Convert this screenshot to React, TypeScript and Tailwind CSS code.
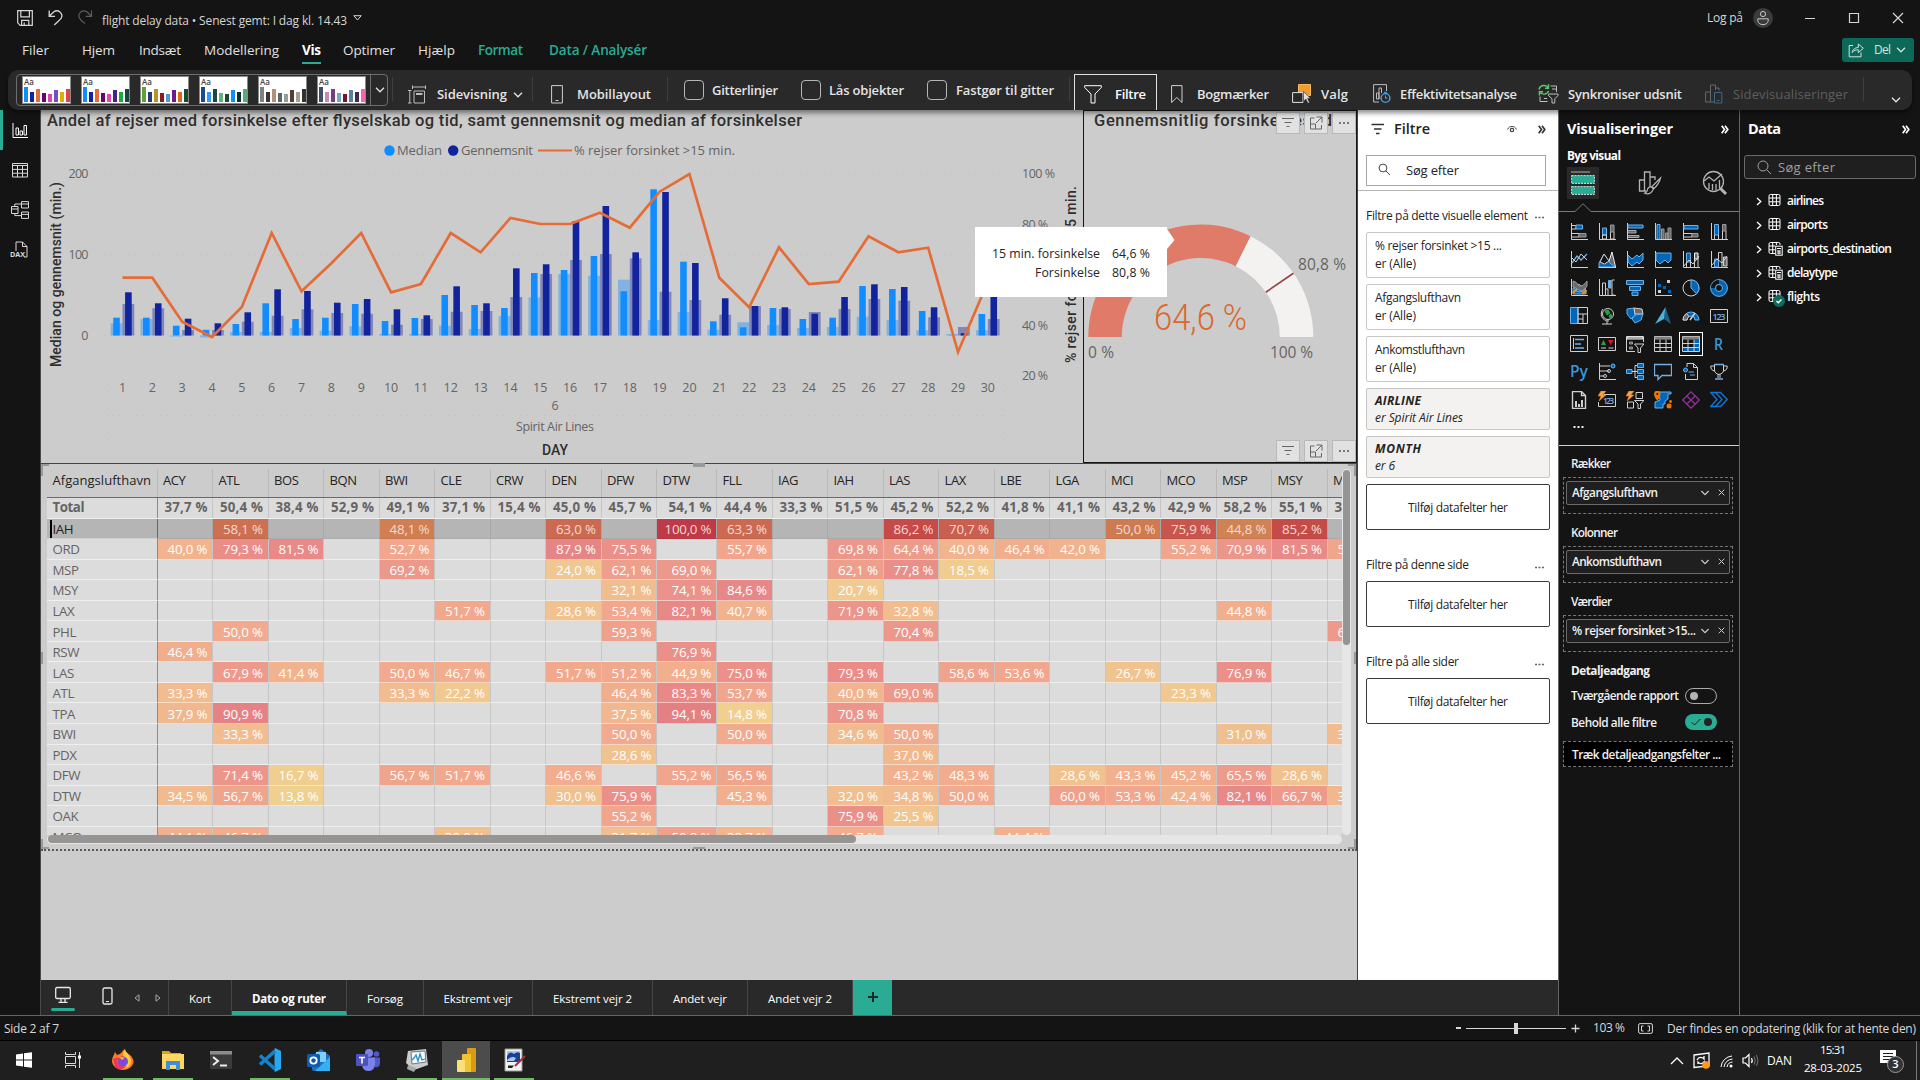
import React, { useLayoutEffect, useRef, useState } from "react";
import clsx from "clsx";

/* Text that is tracked so that it fills a given width. */
function Fit({ w, className, children }: { w: number; className?: string; children: string }) {
  const ref = useRef<HTMLSpanElement>(null);
  const [ls, setLs] = useState(0);
  useLayoutEffect(() => {
    const el = ref.current;
    if (el) setLs((w - el.getBoundingClientRect().width) / Math.max(1, children.length - 1));
  }, [w, children]);
  return (
    <span className={clsx("inline-block shrink-0 whitespace-pre", className)} style={{ width: w }}>
      <span ref={ref} className="inline-block" style={{ letterSpacing: ls }}>
        {children}
      </span>
    </span>
  );
}

type IconProps = { className?: string; children: React.ReactNode; w?: number; h?: number };
const Ico = ({ className, children, w = 18, h = 18 }: IconProps) => (
  <svg width={w} height={h} viewBox={`0 0 ${w} ${h}`} fill="none" stroke="currentColor" className={clsx("shrink-0", className)}>
    {children}
  </svg>
);

const Chevron = ({ className }: { className?: string }) => (
  <Ico w={10} h={6} className={className}>
    <path d="M1 .8L5 4.8L9 .8" strokeWidth="1.3" />
  </Ico>
);

/* ---------- title bar and menu ---------- */

function TitleBar() {
  return (
    <div className="flex h-9 items-center text-[#d6d6d6]">
      <Ico w={16} h={16} className="ml-[17px]">
        <path d="M.7 .7H15.3V15.3H3.2L.7 12.8Z" strokeWidth="1.2" />
        <path d="M3.8 .7V6.8H12.4V.7M4.6 15V10.4H11.8V15M7.2 12.5V15" strokeWidth="1.2" />
      </Ico>
      <Ico w={16} h={17} className="-mt-px ml-[15px]">
        <path d="M1.2 1.5V7.3H7M1.4 7L5.6 3C10 -.2 15.4 4 13.4 8.8C12.6 10.6 8.5 14 6.2 16" strokeWidth="1.3" />
      </Ico>
      <Ico w={16} h={17} className="-mt-px ml-[13px] text-[#5c5c5c]">
        <path d="M14.5 1.5V7.3H8.7M14.3 7L10.1 3C5.7 -.2 .3 4 2.3 8.8C3 10.4 5 12.5 8 14.5" strokeWidth="1.2" />
      </Ico>
      <Fit w={245} className="ml-[9px] mt-[5px] text-[12px]">flight delay data • Senest gemt: I dag kl. 14.43</Fit>
      <Ico w={9} h={6} className="ml-[6px]">
        <path d="M.8 .7H8.2L4.5 5Z" />
      </Ico>
      <Fit w={36} className="ml-[1345px] text-[12px]">Log på</Fit>
      <div className="ml-[10px] flex size-5 items-center justify-center rounded-full bg-[#3b3b3b]">
        <Ico w={14} h={16} className="text-[#c8c8c8]">
          <circle cx="7" cy="4" r="2.6" />
          <path d="M1.8 8.8H12.2C12.6 13 10 14.6 7 14.6S1.4 13 1.8 8.8Z" />
        </Ico>
      </div>
      <Ico w={12} h={12} className="ml-[31px] -mt-px"><path d="M1 6.5H11" /></Ico>
      <Ico w={12} h={12} className="ml-[32px]"><path d="M1.5 1.5H10.5V10.5H1.5Z" strokeWidth="1.2" /></Ico>
      <Ico w={12} h={12} className="ml-[32px]"><path d="M1 1L11 11M11 1L1 11" strokeWidth="1.2" /></Ico>
    </div>
  );
}

function MenuBar() {
  return (
    <div className="flex h-[34px] items-start pt-[3px] text-[13.5px] leading-[22px] text-[#e0e0e0]">
      <Fit w={27} className="ml-[22px]">Filer</Fit>
      <Fit w={33} className="ml-[33px]">Hjem</Fit>
      <Fit w={42} className="ml-[24px]">Indsæt</Fit>
      <Fit w={75} className="ml-[23px]">Modellering</Fit>
      <div className="-translate-y-px ml-[23px] mt-px h-[25px] w-[19px] border-b-2 border-[#2aac94] font-bold leading-[22px] text-white">
        <Fit w={19}>Vis</Fit>
      </div>
      <Fit w={52} className="ml-[22px]">Optimer</Fit>
      <Fit w={37} className="ml-[23px]">Hjælp</Fit>
      <Fit w={45} className="ml-[23px] font-semibold text-[#2aac94]">Format</Fit>
      <Fit w={98} className="ml-[26px] font-semibold text-[#2aac94]">Data / Analysér</Fit>
      <div className="-mt-px ml-[1195px] flex h-6 w-[72px] items-center rounded-[3px] bg-[#0c695a] text-[#cfe3df]">
        <Ico w={16} h={16} className="ml-[6px]">
          <path d="M5 3.5H1.2V14.8H13V10.5" />
          <path d="M4 10.5C5 7 7.5 5.500 10.300 5.500V2L15.300 6.300L10.300 10.600V7.800C8 7.600 6 8.400 4 10.500Z" />
        </Ico>
        <Fit w={17} className="ml-[10px] text-[12px]">Del</Fit>
        <Chevron className="ml-[5px]" />
      </div>
    </div>
  );
}

/* ---------- ribbon ---------- */

const heights = [15, 10, 13, 9, 8, 12, 10, 13];
const themes: string[][] = [
  ["#118dff", "#12239e", "#e66c37", "#6b007b", "#e044a7", "#744ec2", "#d9b300", "#d64550"],
  ["#118dff", "#12239e", "#e66c37", "#6b007b", "#e645ab", "#45247f", "#1aab40", "#15443e"],
  ["#5ea336", "#2b3b70", "#b0962e", "#8b1a1a", "#5b93d3", "#6b1b8f", "#e0671a", "#174d2c"],
  ["#1b4a8e", "#3297ff", "#174a45", "#63b17d", "#174d2c", "#118dff", "#0c2e28", "#5ea580"],
  ["#7a8387", "#3d3331", "#b59078", "#5b6467", "#8fa09a", "#5c3a33", "#a89f94", "#333333"],
  ["#3e4f63", "#c987b5", "#75407a", "#75a5c9", "#7a0f3f", "#58839e", "#4a2550", "#ee6ab0"],
];

function Thumb({ bars }: { bars: string[] }) {
  return (
    <div className="flex h-7 w-[49px] shrink-0 flex-col border border-[#8a8a8a] bg-white pl-px">
      <span className="h-[10px] text-[8px] leading-[10px] text-[#444]">Aa</span>
      <div className="flex h-[15px] items-end gap-[2px]">
        {bars.map((b, i) => (
          <span key={i} className="w-[4px]" style={{ backgroundColor: b, height: heights[i] }} />
        ))}
      </div>
    </div>
  );
}

const Sep = ({ className }: { className: string }) => <span className={clsx("mb-[2px] h-6 w-px shrink-0 bg-[#3f3f3f]", className)} />;
const Check = ({ className }: { className: string }) => (
  <span className={clsx("size-5 shrink-0 rounded-[4px] border border-[#b5b5b5]", className)} />
);

function Ribbon() {
  return (
    <div className="relative z-10 ml-2 flex h-10 w-[1904px] items-center rounded-[10px] bg-[#292929] text-[13px] font-semibold text-[#e4e4e4] shadow-[0_3px_5px_rgba(0,0,0,0.45)]">
      <div className="ml-2 flex h-8 w-[372px] shrink-0 items-center rounded-[4px] border border-[#6e6e6e]">
        <div className="ml-[5px] flex gap-[10px]">
          {themes.map((t, i) => <Thumb key={i} bars={t} />)}
        </div>
        <span className="ml-[4px] h-full w-px bg-[#6e6e6e]" />
        <Chevron className="ml-[4px]" />
      </div>
      <Sep className="ml-[4px]" />
      <Ico w={18} h={19} className="ml-[15px] mt-2 text-[#bdbdbd]">
        <path d="M4.5 2H17.5M4.5 .5V4M17.5 .5V4M1.8 5.5V18M0 5.5H3.5M0 18H3.5M6 6H16.5V18H6Z" />
        <path d="M8 9H14.5" strokeWidth="2" />
      </Ico>
      <Fit w={70} className="ml-[11px] mt-[9px]">Sidevisning</Fit>
      <Chevron className="ml-[6px] mt-[9px]" />
      <Sep className="ml-[9px]" />
      <Ico w={12} h={19} className="ml-[18px] mt-2 text-[#d0d0d0]">
        <path d="M.6 .6H11.4V18H.6ZM4.5 15.5H7.5" />
      </Ico>
      <Fit w={74} className="ml-[14px] mt-[9px]">Mobillayout</Fit>
      <Sep className="ml-[16px]" />
      <Check className="ml-[16px]" />
      <Fit w={66} className="ml-[8px] mt-px">Gitterlinjer</Fit>
      <Check className="ml-[23px]" />
      <Fit w={75} className="ml-[8px] mt-px">Lås objekter</Fit>
      <Check className="ml-[23px]" />
      <Fit w={98} className="ml-[9px] mt-px">Fastgør til gitter</Fit>
      <Sep className="ml-[15px]" />
      <div className="ml-[4px] mt-1 flex h-9 w-[83px] shrink-0 items-center border border-b-0 border-[#e0e0e0] text-white">
        <Ico w={18} h={19} className="ml-[9px] mt-1">
          <path d="M.7 .7H17.3V2.5L11 9V18H7V9L.7 2.5Z" />
        </Ico>
        <Fit w={31} className="ml-[13px] mt-1">Filtre</Fit>
      </div>
      <Ico w={12} h={19} className="ml-[14px] mt-2 text-[#d0d0d0]">
        <path d="M.6 .6H11V17.5L5.8 12.5L.6 17.5Z" />
      </Ico>
      <Fit w={72} className="ml-[14px] mt-[9px]">Bogmærker</Fit>
      <Ico w={20} h={20} className="ml-[23px] mt-2">
        <path d="M6.5 .5H18.5V11.5H6.5Z" fill="#f09d2d" stroke="#f7b85c" />
        <path d="M.6 8.6H11V18.4H.6Z" fill="#292929" />
        <path d="M11.5 7.5L18.5 14.2L15.6 14.4L17.5 18.4L15.8 19.2L14 15.2L11.5 17.2Z" fill="#ddd" stroke="#292929" strokeWidth=".6" />
      </Ico>
      <Fit w={27} className="ml-[9px] mt-[9px]">Valg</Fit>
      <Ico w={18} h={20} className="ml-[25px] mt-2 text-[#bdbdbd]">
        <path d="M6 18H.6V.6H13.5V7M3.5 15V9H6V15ZM6 15V4H8.5V9" />
        <circle cx="12.5" cy="14" r="4.4" stroke="#4da3dd" strokeWidth="1.4" />
        <path d="M12.5 11.5V14.2H14.5M11 8.4H14" stroke="#4da3dd" />
      </Ico>
      <Fit w={117} className="ml-[9px] mt-[9px]">Effektivitetsanalyse</Fit>
      <Ico w={21} h={20} className="ml-[21px] mt-2 text-[#bdbdbd]">
        <path d="M1 5.5C2 1 8 0 10.5 4M10.5 .3V4.2H7M10.5 7C9 11 3.5 11 1.6 8M1.4 11.5V7.8H5" stroke="#63c46f" strokeWidth="1.4" />
        <path d="M12.5 2H18.5V8M14 5H18M2 12.5V17.5H9.5M6 14.5H9" />
        <path d="M10.5 10H20V11.5L16.8 14.8V19H14V14.8L10.5 11.5Z" />
      </Ico>
      <Fit w={114} className="ml-[9px] mt-[9px]">Synkroniser udsnit</Fit>
      <Ico w={18} h={20} className="ml-[23px] mt-2 text-[#686868]">
        <path d="M9 18H.6V8H5.5V18M5.5 8V1H10.5V6M10.5 4H14V6.5" />
        <path d="M9.5 8.5H16.8V19H9.5ZM12 16.5H14.5" stroke="#3f6a85" />
      </Ico>
      <Fit w={115} className="ml-[10px] mt-[9px] font-normal text-[#5e5e5e]">Sidevisualiseringer</Fit>
      <Sep className="ml-[15px]" />
      <Chevron className="ml-[27px] mt-[19px]" />
    </div>
  );
}

/* ---------- left rail ---------- */

function Rail() {
  return (
    <div className="relative flex w-[41px] shrink-0 flex-col items-center border-r border-[#4a4a4a] bg-[#141414] pt-[11px] text-[#d8d8d8]">
      <span className="absolute left-0 top-0 h-10 w-[3px] bg-[#2aac94]" />
      <Ico className="text-white"><path d="M2 2V16.5H17M5 14V7H7.5V14ZM9 14V10H11.5V14ZM13 14V4.5H15.5V14Z" /></Ico>
      <Ico className="mt-[22px]"><path d="M1.5 2.5H16.5V16H1.5ZM1.5 4.5H16.5M1.5 8.4H16.5M1.5 12.2H16.5M6.5 4V16M11.5 4V16" /></Ico>
      <Ico w={20} h={18} className="mt-[22px]"><path d="M1.5 5.5H8V12.5H1.5ZM1.5 8H8M11.5 .6H18.5V7H11.5ZM11.5 3H18.5M11.5 11H18.5V17.4H11.5ZM11.5 13.4H18.5M4.8 5.5V3H11.5M4.8 12.5V14.6H11.5" /></Ico>
      <svg width="20" height="20" viewBox="0 0 20 20" className="mt-[21px]">
        <path d="M6 11V2H12.5L17 6.5V17H14M12.5 2V6.5H17" fill="none" stroke="currentColor" />
        <text x="0" y="17" fontSize="7.5" fontWeight="700" textLength="15" lengthAdjust="spacingAndGlyphs" fill="currentColor">DAX</text>
      </svg>
    </div>
  );
}

/* ---------- combo chart ---------- */

// Pixel tops: [light back, light front, dark back, dark front, line]
const days: number[][] = [
  [323.3, 317.7, 304, 292.3, 277.7], [319, 317.7, 308.3, 303.3, 277.7], [336.5, 325.7, 330, 318.7, 321.7],
  [337.5, 329.8, 330, 323.3, 337], [332, 324, 321.7, 312.3, 307], [332, 303.3, 315.7, 289.3, 233],
  [328, 319, 309.3, 291, 291.3], [330.7, 317.7, 313, 302.7, 263.3], [326.3, 304, 313.7, 299, 233],
  [334, 321, 324.7, 309.3, 292.3], [334, 318, 319, 315.3, 284], [325.7, 295, 311.7, 286.3, 233],
  [329, 305, 311, 303.3, 252.3], [316, 308, 297, 268.3, 218], [297.3, 273, 274, 264.3, 224],
  [274, 270, 260, 221, 224], [275.7, 256, 254, 206, 212.7], [279.7, 291.3, 258.3, 252.3, 227.7],
  [320, 189.3, 291.7, 192, 191.7], [312, 261.7, 300, 263, 174], [329.7, 321.3, 314.7, 298.3, 277.7],
  [322.3, 327.3, 306, 306, 307.3], [325, 308, 309, 307.3, 247.3], [328, 319, 312, 313.7, 284],
  [327, 317.7, 309, 297, 281.7], [316.7, 286, 299, 284.3, 236.3], [320, 289, 300.7, 287, 252.3],
  [330.3, 311, 317.3, 307.3, 247.7], [334, 335.3, 327, 333.3, 352], [330.3, 314, 319, 294, 281.7],
];
const cx = (i: number) => 122.5 + i * 29.84;
const BASE = 335.5;

function ComboChart() {
  const bar = (x: number, w: number, y: number, fill: string) => (
    <rect x={x} width={w} y={Math.min(y, BASE)} height={Math.abs(BASE - y)} fill={fill} />
  );
  return (
    <svg width="1042" height="353" viewBox="41 110 1042 353" className="shrink-0" fontSize="12.5" fill="#666463">
      <text x="47" y="126" textLength="755" className="font-['Roboto'] font-medium" fontSize="16.5" fill="#302f2e">Andel af rejser med forsinkelse efter flyselskab og tid, samt gennemsnit og median af forsinkelser</text>
      <circle cx="389.5" cy="150.5" r="5.2" fill="#118dff" />
      <text x="397" y="155" textLength="45" fontSize="13">Median</text>
      <circle cx="453.2" cy="150.5" r="5.2" fill="#12239e" />
      <text x="461" y="155" textLength="72" fontSize="13">Gennemsnit</text>
      <path d="M538 150.5H572" stroke="#e66c37" strokeWidth="2" />
      <text x="574" y="155" textLength="161" fontSize="13">% rejser forsinket &gt;15 min.</text>
      {[174, 255, 336].map((y) => (
        <path key={y} d={`M98 ${y}H1012`} stroke="#c0c0c0" strokeDasharray="1 5" />
      ))}
      <path d="M107.5 379V440M1003.5 379V440M107 415.5H1003" stroke="#c0c0c0" strokeDasharray="1 5" />
      <text x="88.5" y="178" textAnchor="end" textLength="20">200</text>
      <text x="88.5" y="259" textAnchor="end" textLength="20">100</text>
      <text x="88.5" y="340" textAnchor="end">0</text>
      <text x="1022" y="178" textLength="33">100 %</text>
      <text x="1022" y="229" textLength="26">80 %</text>
      <text x="1022" y="330" textLength="26">40 %</text>
      <text x="1022" y="380" textLength="26">20 %</text>
      <text transform="translate(60.5 367) rotate(-90)" textLength="185" className="font-['Roboto'] font-medium" fontSize="14" fill="#302f2e">Median og gennemsnit (min.)</text>
      <text transform="translate(1075.5 363) rotate(-90)" textLength="177" className="font-['Roboto'] font-medium" fontSize="14" fill="#302f2e">% rejser forsinket &gt;15 min.</text>
      {days.map((d, i) => (
        <g key={i}>
          {bar(cx(i) - 11.8, 11.8, d[0], "rgba(17,141,255,0.4)")}
          {bar(cx(i), 11.8, d[2], "rgba(18,35,158,0.4)")}
          {bar(cx(i) - 9.3, 6.6, d[1], "#118dff")}
          {bar(cx(i) + 2.6, 6.6, d[3], "#12239e")}
          <text x={cx(i)} y="392" textAnchor="middle">{i + 1}</text>
        </g>
      ))}
      <polyline points={days.map((d, i) => `${cx(i)},${d[4]}`).join(" ")} fill="none" stroke="#e66c37" strokeWidth="2.7" />
      <text x="555" y="410" textAnchor="middle">6</text>
      <text x="516" y="431" textLength="78">Spirit Air Lines</text>
      <text x="542" y="455" textLength="26" className="font-['Roboto'] font-medium" fontSize="14" fill="#302f2e">DAY</text>
    </svg>
  );
}

/* ---------- gauge ---------- */

const GX = 1200.8, GY = 337, RO = 112.5, RI = 79;
const pt = (r: number, f: number) => `${GX - r * Math.cos(Math.PI * f)} ${GY - r * Math.sin(Math.PI * f)}`;
const arc = (a: number, b: number) => `M${pt(RO, a)}A${RO} ${RO} 0 0 1 ${pt(RO, b)}L${pt(RI, b)}A${RI} ${RI} 0 0 0 ${pt(RI, a)}Z`;

function VisualButtons({ className }: { className: string }) {
  const box = "flex h-[22px] w-6 items-center justify-center border border-[#b9b9b9] bg-[#e1e1e1] text-[#666]";
  return (
    <div className={clsx("absolute right-0 flex gap-1", className)}>
      <span className={box}><Ico w={14} h={12}><path d="M1 1.5H13M3.5 5.5H10.5M5.5 9.5H8.5" /></Ico></span>
      <span className={box}><Ico w={14} h={14}><path d="M5.5 2H1.5V13H12.5V9M7.5 1H13V6.5M13 1L7 7M1.5 8H6.5V13" /></Ico></span>
      <span className={box}><Ico w={14} h={12}><path d="M2 6H4M6 6H8M10 6H12" strokeWidth="2" stroke="#777" /></Ico></span>
    </div>
  );
}

function Gauge() {
  return (
    <div className="relative h-[353px] w-[274px] shrink-0 border border-[#151515]">
      <svg width="272" height="351" viewBox="1084 111 272 351" fill="#666463">
        <text x="1094" y="126" textLength="238" className="font-['Roboto'] font-medium" fontSize="16.5" fill="#302f2e">Gennemsnitlig forsinkelsestid</text>
        <path d={arc(0, 0.646)} fill="#e07b69" />
        <path d={arc(0.646, 1)} fill="#f3f2f0" />
        <path d={`M${pt(RI, 0.808)}L${pt(RO, 0.808)}`} stroke="#944747" strokeWidth="1.7" />
        <text x="1154" y="329.5" textLength="93" lengthAdjust="spacingAndGlyphs" className="font-['Roboto'] font-light" fontSize="36.5" fill="#d9692f">64,6 %</text>
        <text x="1298" y="270" textLength="48" fontSize="15.5">80,8 %</text>
        <text x="1088" y="358" textLength="26" fontSize="15.5">0 %</text>
        <text x="1270" y="358" textLength="43" fontSize="15.5">100 %</text>
      </svg>
      <VisualButtons className="top-[1px]" />
      <VisualButtons className="bottom-0" />
    </div>
  );
}

/* ---------- matrix ---------- */

const cols = ["ACY", "ATL", "BOS", "BQN", "BWI", "CLE", "CRW", "DEN", "DFW", "DTW", "FLL", "IAG", "IAH", "LAS", "LAX", "LBE", "LGA", "MCI", "MCO", "MSP", "MSY", "MYR"];
const totals = "37,7 50,4 38,4 52,9 49,1 37,1 15,4 45,0 45,7 54,1 44,4 33,3 51,5 45,2 52,2 41,8 41,1 43,2 42,9 58,2 55,1 36,4".split(" ");
const body: [string, string][] = [
  ["IAH", "- 58,1 - - 48,1 - - 63,0 - 100,0 63,3 - - 86,2 70,7 - - 50,0 75,9 44,8 85,2 -"],
  ["ORD", "40,0 79,3 81,5 - 52,7 - - 87,9 75,5 - 55,7 - 69,8 64,4 40,0 46,4 42,0 - 55,2 70,9 81,5 54,3"],
  ["MSP", "- - - - 69,2 - - 24,0 62,1 69,0 - - 62,1 77,8 18,5 - - - - - - -"],
  ["MSY", "- - - - - - - - 32,1 74,1 84,6 - 20,7 - - - - - - - - -"],
  ["LAX", "- - - - - 51,7 - 28,6 53,4 82,1 40,7 - 71,9 32,8 - - - - - 44,8 - -"],
  ["PHL", "- 50,0 - - - - - - 59,3 - - - - 70,4 - - - - - - - 66,7"],
  ["RSW", "46,4 - - - - - - - - 76,9 - - - - - - - - - - - -"],
  ["LAS", "- 67,9 41,4 - 50,0 46,7 - 51,7 51,2 44,9 75,0 - 79,3 - 58,6 53,6 - 26,7 - 76,9 - -"],
  ["ATL", "33,3 - - - 33,3 22,2 - - 46,4 83,3 53,7 - 40,0 69,0 - - - - 23,3 - - -"],
  ["TPA", "37,9 90,9 - - - - - - 37,5 94,1 14,8 - 70,8 - - - - - - - - -"],
  ["BWI", "- 33,3 - - - - - - 50,0 - 50,0 - 34,6 50,0 - - - - - 31,0 - 33,3"],
  ["PDX", "- - - - - - - - 28,6 - - - - 37,0 - - - - - - - -"],
  ["DFW", "- 71,4 16,7 - 56,7 51,7 - 46,6 - 55,2 56,5 - - 43,2 48,3 - 28,6 43,3 45,2 65,5 28,6 -"],
  ["DTW", "34,5 56,7 13,8 - - - - 30,0 75,9 - 45,3 - 32,0 34,8 50,0 - 60,0 53,3 42,4 82,1 66,7 37,9"],
  ["OAK", "- - - - - - - - 55,2 - - - 75,9 25,5 - - - - - - - -"],
  ["MCO", "44,1 46,7 - - - 30,0 - - 31,7 59,8 38,7 - 46,7 - - 44,4 - - - - - -"],
];

const normalStops: [number, number[]][] = [[13, [240, 209, 143]], [25, [240, 198, 144]], [40, [241, 180, 142]], [50, [241, 170, 141]], [70, [236, 151, 139]], [80, [234, 139, 136]], [95, [227, 127, 132]]];
const selectedStops: [number, number[]][] = [[44, [209, 131, 83]], [50, [207, 123, 82]], [63, [204, 106, 81]], [76, [201, 86, 77]], [86, [197, 74, 72]], [100, [190, 58, 72]]];
function shade(v: number, stops: [number, number[]][]) {
  let i = 0;
  while (i < stops.length - 2 && v > stops[i + 1][0]) i++;
  const [a, ca] = stops[i];
  const [b, cb] = stops[i + 1];
  const t = Math.max(0, Math.min(1, (v - a) / (b - a)));
  return `rgb(${ca.map((c, k) => Math.round(c + (cb[k] - c) * t)).join(",")})`;
}
const colW = (i: number) => (i === 9 ? "w-[60px]" : "w-[55.5px]");

function Matrix() {
  return (
    <div className="relative h-[388px] border-b-2 border-r border-t border-b-[#555] border-r-[#444] border-t-[#444] [border-bottom-style:dotted]">
      <span className="absolute left-0 top-0 h-3 w-2 border-l-2 border-t-2 border-[#999]" />
      <span className="absolute -top-[1px] left-[652px] h-1 w-3 bg-[#999]" />
      <span className="absolute right-0 top-0 h-3 w-2 border-r-2 border-t-2 border-[#999]" />
      <span className="absolute bottom-0 left-0 h-[10px] w-2 border-b-2 border-l-2 border-[#999]" />
      <span className="absolute bottom-0 right-0 h-[10px] w-2 border-b-2 border-r-2 border-[#999]" />
      <span className="absolute bottom-0 left-[652px] h-[2px] w-3 bg-[#999]" />
      <span className="absolute left-0 top-[188px] h-3 w-[2px] bg-[#999]" />
      <span className="absolute right-0 top-[188px] h-3 w-[2px] bg-[#999]" />
      <div className="ml-[6px] mt-[5px] flex">
        <div className="h-[366px] w-[1295px] overflow-hidden text-[13.3px] text-[#666463]">
          <div className="w-max">
            <div className="flex h-[29px] items-center border-b border-[#6a6a6a] text-[13px] text-[#252423]">
              <span className="flex h-full w-[110.5px] items-center border-r border-[#b8b8b8] pb-[5px] pl-[5.5px]"><Fit w={98.5}>Afgangslufthavn</Fit></span>
              {cols.map((c, i) => (
                <span key={c} className={clsx("flex h-full items-center border-r border-[#b8b8b8] pb-[5px] pl-[5.5px] tracking-[-0.4px]", colW(i))}>{c}</span>
              ))}
            </div>
            <div className="flex h-[20.5px] items-center border-b border-[#efefef] bg-[#dcdcdc] font-bold">
              <span className="flex h-full w-[110.5px] items-center border-r border-[#8a8a8a] pl-[5.5px] pt-px"><Fit w={32}>Total</Fit></span>
              {totals.map((t, i) => (
                <span key={i} className={clsx("flex h-full items-center justify-end border-r border-[#c4c4c4] pr-[4.5px] pt-px", colW(i))}><Fit w={43}>{t + " %"}</Fit></span>
              ))}
            </div>
            {body.map(([name, vals], r) => (
              <div key={name} className={clsx("flex h-[20.55px] leading-[20px]", r === 0 ? "bg-[#b5b5b5]" : "bg-[#dcdcdc]")}>
                <span className={clsx("flex h-full w-[110.5px] items-center border-b border-r pl-[5.5px] pt-px tracking-[-0.4px]", r === 0 ? "border-b-[#cfcfcf] border-r-[#666] text-[#252423]" : "border-b-[#efefef] border-r-[#8a8a8a]")}>
                  {r === 0 && <span className="-ml-[3px] mr-[1px] h-full w-[2px] bg-black" />}
                  {name}
                </span>
                {vals.split(" ").map((v, i) => {
                  const filled = v !== "-";
                  const n = parseFloat(v.replace(",", "."));
                  return (
                    <span
                      key={i}
                      className={clsx("flex h-full items-center justify-end border-b border-r pr-[4.5px] pt-px", r === 0 ? "border-b-black/5 border-r-[#a8a8a8] text-[#f0dcd6]" : "border-b-white/50 border-r-[#c6c6c6] text-white", colW(i))}
                      style={filled ? { backgroundColor: shade(n, r === 0 ? selectedStops : normalStops) } : undefined}
                    >
                      {filled && <Fit w={v.length > 4 ? 47 : 40}>{v + " %"}</Fit>}
                    </span>
                  );
                })}
              </div>
            ))}
          </div>
        </div>
        <div className="h-[366px] w-[9px] rounded-full bg-[#e6e6e6]">
          <div className="ml-px mt-[1px] h-[175px] w-[7px] rounded-full bg-[#979593]" />
        </div>
      </div>
      <div className="ml-[6px] h-[9px] w-[1295px] rounded-full bg-[#e6e6e6]">
        <div className="ml-[1px] h-2 w-[808px] rounded-full bg-[#979593]" />
      </div>
    </div>
  );
}

function Tooltip() {
  return (
    <div className="absolute left-[934px] top-[117px] flex h-[70px] w-[192px] bg-white pt-[17px] text-[12.3px] leading-[19px] text-[#252423]">
      <div className="flex w-[125px] flex-col items-end"><Fit w={108}>15 min. forsinkelse</Fit><Fit w={65}>Forsinkelse</Fit></div>
      <div className="ml-[12px] flex flex-col"><Fit w={38}>64,6 %</Fit><Fit w={38}>80,8 %</Fit></div>
      <svg width="8" height="22" viewBox="0 0 8 22" className="absolute -right-[8px] top-[2px]"><path d="M0 0L7.5 11L0 20Z" fill="#fff" /></svg>
    </div>
  );
}

/* ---------- page tabs ---------- */

function PageTabs() {
  const tab = "flex h-full shrink-0 items-center justify-center border-r border-[#454545] text-white";
  return (
    <div className="flex h-[35px] items-center bg-[#292929] text-[11.5px]">
      <div className="flex h-full w-[44px] flex-col items-center pt-[6px] text-[#e8e8e8]">
        <Ico w={18} h={18}><path d="M3 1.5H15Q16.3 1.5 16.3 3V11Q16.3 12.5 15 12.5H3Q1.7 12.5 1.7 11V3Q1.7 1.5 3 1.5ZM7 12.5V16M11 12.5V16M4.5 16.3H13.5" strokeWidth="1.3" /></Ico>
        <span className="mt-[4px] h-[3px] w-6 rounded-full bg-[#2aac94]" />
      </div>
      <Ico w={11} h={18} className="mb-[4px] ml-[17px] text-[#e8e8e8]"><rect x="1" y="1" width="9" height="16" rx="1.5" strokeWidth="1.3" /><path d="M4 14.5H7" /></Ico>
      <Ico w={6} h={8} className="ml-[21px] text-[#aaa]"><path d="M5 .8V7.2L1 4Z" /></Ico>
      <Ico w={6} h={8} className="ml-[15px] text-[#aaa]"><path d="M1 .8V7.2L5 4Z" /></Ico>
      <span className="ml-[7px] h-full w-px bg-[#454545]" />
      <span className={clsx(tab, "w-[63px] pt-[3px]")}><Fit w={22}>Kort</Fit></span>
      <span className={clsx(tab, "w-[115px] border-b-4 border-b-[#2aac94] pt-[7px] font-bold")}><Fit w={74}>Dato og ruter</Fit></span>
      <span className={clsx(tab, "w-[77px] pt-[3px]")}><Fit w={36}>Forsøg</Fit></span>
      <span className={clsx(tab, "w-[109px] pt-[3px]")}><Fit w={69}>Ekstremt vejr</Fit></span>
      <span className={clsx(tab, "w-[120px] pt-[3px]")}><Fit w={79}>Ekstremt vejr 2</Fit></span>
      <span className={clsx(tab, "w-[95px] pt-[3px]")}><Fit w={54}>Andet vejr</Fit></span>
      <span className={clsx(tab, "w-[105px] pt-[3px]")}><Fit w={64}>Andet vejr 2</Fit></span>
      <span className="flex h-full w-[39px] items-center justify-center bg-[#2aac94] text-[#1c2b28]">
        <Ico w={12} h={12} className="mb-[2px]"><path d="M6 1V11M1 6H11" strokeWidth="2" /></Ico>
      </span>
    </div>
  );
}

/* ---------- filter pane ---------- */

const Dots = ({ className }: { className?: string }) => (
  <Ico w={9} h={3} className={className}><path d="M0 1.5H2M3.5 1.5H5.5M7 1.5H9" strokeWidth="1.6" /></Ico>
);
const Double = ({ className }: { className?: string }) => (
  <Ico w={8} h={9} className={className}><path d="M.7 .7L3.5 4.5L.7 8.3M4 .7L6.8 4.5L4 8.3" strokeWidth="1.7" /></Ico>
);

function FilterCard({ title, w1, sub, w2 }: { title: string; w1: number; sub: string; w2: number }) {
  return (
    <div className="mt-[6px] flex h-[46px] w-[184px] flex-col rounded-[2px] border border-[#c8c6c4] pl-2 pt-[4px] leading-[18px]">
      <Fit w={w1}>{title}</Fit>
      <Fit w={w2}>{sub}</Fit>
    </div>
  );
}
function FixedCard({ title, w1, sub, w2 }: { title: string; w1: number; sub: string; w2: number }) {
  return (
    <div className="mt-[6px] flex h-[42px] w-[184px] flex-col rounded-[2px] border border-[#c8c6c4] bg-[#f3f2f1] pl-2 pt-[4px] italic leading-[16.5px]">
      <Fit w={w1} className="font-bold">{title}</Fit>
      <Fit w={w2}>{sub}</Fit>
    </div>
  );
}
const DropBox = ({ className }: { className: string }) => (
  <div className={clsx("flex h-[46px] w-[184px] items-center justify-center rounded-[2px] border border-[#3b3a39] pt-px", className)}>
    <Fit w={100}>Tilføj datafelter her</Fit>
  </div>
);

function FilterPane() {
  return (
    <div className="flex h-[870px] w-[201px] flex-col border-l border-[#444] bg-white pl-2 text-[12px] text-[#252423]">
      <div className="flex h-[38px] items-center">
        <Ico w={14} h={12} className="ml-[5px] text-[#333]"><path d="M.5 1.5H13M3 6H10.5M5 10.5H8.5" strokeWidth="1.4" /></Ico>
        <Fit w={36} className="ml-[9px] text-[14.5px] font-semibold">Filtre</Fit>
        <Ico w={10} h={8} className="ml-[77px] text-[#444]"><path d="M.6 4.5C2 .4 8 .4 9.400 4.5" /><circle cx="5" cy="5" r="1.7" strokeWidth="1.2" /></Ico>
        <Double className="ml-[21px] text-[#333]" />
      </div>
      <div className="mt-[7px] flex h-[31px] w-[180px] items-center border border-[#a8a6a4]">
        <Ico w={13} h={13} className="mb-[2px] ml-[11px] text-[#444]"><circle cx="5" cy="5" r="3.9" /><path d="M8 8L12 12" /></Ico>
        <Fit w={53} className="ml-[15px] text-[13px]">Søg efter</Fit>
      </div>
      <span className="-ml-2 mt-[4px] h-px w-[200px] bg-[#b5b3b1]" />
      <div className="mb-[1px] mt-[15px] flex h-[19px] items-center"><Fit w={162}>Filtre på dette visuelle element</Fit><Dots className="ml-[7px] mt-1 text-[#666]" /></div>
      <FilterCard title="% rejser forsinket >15 ..." w1={127} sub="er (Alle)" w2={41} />
      <FilterCard title="Afgangslufthavn" w1={86} sub="er (Alle)" w2={41} />
      <FilterCard title="Ankomstlufthavn" w1={90} sub="er (Alle)" w2={41} />
      <FixedCard title="AIRLINE" w1={46} sub="er Spirit Air Lines" w2={88} />
      <FixedCard title="MONTH" w1={46} sub="er 6" w2={20} />
      <DropBox className="mt-[6px]" />
      <div className="mt-[25px] flex h-[20px] w-[184px] items-center justify-between pr-[6px]"><Fit w={103}>Filtre på denne side</Fit><Dots className="mt-1 text-[#666]" /></div>
      <DropBox className="mt-[6px]" />
      <div className="mt-[25px] flex h-[20px] w-[184px] items-center justify-between pr-[6px]"><Fit w={93}>Filtre på alle sider</Fit><Dots className="mt-1 text-[#666]" /></div>
      <DropBox className="mt-[6px]" />
    </div>
  );
}

/* ---------- visualisation pane ---------- */

const W = "#d2d0ce", B = "#0067b8", L = "#71afe5", G = "#6b6967";
const axis = <path d="M1.5 0V16.5H18" stroke={W} />;
const visIcons: React.ReactNode[] = [
  <>{axis}<path d="M2 2.5H6V6H2" stroke={W} /><path d="M6 2H12.5V6H6Z" fill={B} stroke={L} /><path d="M2 10.5H9V14H2" stroke={W} /><path d="M9 10.5H16V14H9Z" fill={G} stroke="#999" /></>,
  <>{axis}<path d="M4.5 16V5H8.5V12H4.5" fill={B} stroke={L} /><path d="M4.5 12V16H8.5V12ZM12.5 9V16H16V9" stroke={W} /><path d="M12.5 2H16V9H12.5Z" fill={G} stroke="#999" /></>,
  <>{axis}<path d="M2 2H17V5H2Z" fill={B} stroke={L} /><path d="M2 7.5H10V10H2M2 12.5H13V14.5H2" fill={G} stroke="#aaa" /></>,
  <>{axis}<path d="M3 1.5H6V16H3Z" fill={B} stroke={L} /><path d="M7.5 16V6H10V16M11.5 16V10H14V16M14 16V5H17V16" fill={G} stroke="#999" /></>,
  <>{axis}<path d="M2 2.5H16V6H2Z" fill={B} stroke={L} /><path d="M2 10.5H10V14H2" stroke={W} /><path d="M10 10.5H16V14H10Z" fill={G} stroke="#999" /></>,
  <>{axis}<path d="M4.5 1.5H8.5V12H4.5Z" fill={B} stroke={L} /><path d="M4.5 12V16M8.5 12V16M12.5 8V16M16 8V16" stroke={W} /><path d="M12.5 1.5H16V8H12.5Z" fill={G} stroke="#999" /></>,
  <>{axis}<path d="M2 12L7 5L11 9L17 3" stroke={L} strokeWidth="1.3" /><path d="M2 7L6 11L11 3L17 9" stroke={W} /></>,
  <><path d="M9 16L14 1L17.5 16Z" fill={G} /><path d="M1 12L6 3L12 12L17 16H1Z" fill={B} stroke={L} /><path d="M2 11L6 3L11 10L6.5 13Z" fill="#141414" stroke={W} /><path d="M.5 16.5H18" stroke={W} /></>,
  <>{axis}<path d="M2 4L6 8L11 4L13 6L17 2V9L13 13L11 11L6 15L2 11Z" fill={B} stroke={L} /></>,
  <>{axis}<path d="M2 2H17V9L14 12L11 9L6 13L2 9Z" fill={B} stroke={L} /></>,
  <>{axis}<path d="M4.5 2H8.5V11H4.5Z" fill={B} stroke={L} /><path d="M12.5 2H16V8H12.5Z" fill={G} /><path d="M4.5 11V16M8.5 9V16M12.5 8V16M16 5V16M2 15L7 9L11 13L17 5" stroke={W} /></>,
  <>{axis}<path d="M4.5 8H8.5V16H4.5Z" fill={B} stroke={L} /><path d="M8.5 8V1.5H12V16" stroke={W} /><path d="M13.5 6H17V15H13.5Z" fill={G} stroke={W} /><path d="M2 14L7 8L12 12L17 5" stroke={W} /></>,
  <>{axis}<path d="M3 9L9 5L16 11V15H3Z" fill={B} stroke={L} /><path d="M3 2Q6 2 9 7Q13 8 17 2V7Q13 14 9 11Q5 8 3 8Z" fill={G} stroke="#999" /><path d="M3 14Q5 11 7 11M12 14Q15 14 16 11" stroke="#e8912d" strokeWidth="2.4" /><path d="M4 9Q9 17 16 9" stroke={L} /></>,
  <>{axis}<path d="M4.5 16V4H7.5V16M7.5 10H10V16M16.5 1H14V16H16.5" stroke={W} /><path d="M10.5 1.5H13V9H10.5Z" fill={L} stroke={L} /></>,
  <><path d="M.5 1.5H17.5V5.5H.5ZM3.5 7.5H14.5V11.5H3.5ZM6 13H12V16.5H6Z" fill={B} stroke={L} /></>,
  <>{axis}<path d="M4 5H7V8H4ZM9 7H12V10H9ZM14 11H17V14H14Z" fill={B} stroke="none" /><path d="M13 1H16V4H13ZM4 11H7V14H4Z" fill={W} stroke="none" /></>,
  <><circle cx="9" cy="9" r="8" stroke={W} /><path d="M9 1A8 8 0 0 1 14.5 14.8L9 9Z" fill={B} stroke={L} /></>,
  <><circle cx="9" cy="9" r="6" stroke={B} strokeWidth="5" /><circle cx="9" cy="9" r="8.4" stroke={L} /><path d="M3 9A6 6 0 0 1 9 3" stroke="#141414" strokeWidth="4" /><circle cx="9" cy="9" r="3.5" stroke={L} /></>,
  <><path d="M.5 .5H8V16.5H.5Z" fill={B} stroke={L} /><path d="M8 .5H17.5V16.5H8ZM8 7H17.5M13 7V12M8 12H13V16" stroke={W} /></>,
  <><circle cx="10" cy="7" r="5.5" stroke={W} /><path d="M7 4L10 3L12 6L9 8ZM11 9L13 7L14 9L12 11Z" fill="#2e9e46" stroke="#2e9e46" /><path d="M5 2C1 7 4 14 11 14M9 14V17M4 17H14" stroke={W} /></>,
  <><path d="M1 2L8 1L9 8L5 12L1 7Z" fill={B} stroke={L} /><path d="M8 1L16 2L17 7H9Z" fill={G} stroke={W} /><path d="M9 8L17 7L15 13L9 16L6 12Z" fill={B} stroke={L} /></>,
  <><path d="M11.5 0L17 17L10 12Z" fill="#1b5f8c" stroke="none" /><path d="M11.5 0L10 12L1 17Z" fill="#4fb3e0" stroke="none" /></>,
  <><path d="M1 13A8 8 0 0 1 17 13H13A4 4 0 0 0 5 13Z" fill={B} stroke={L} /><path d="M1 13A8 8 0 0 1 4.5 6.5L7 9.5A4 4 0 0 0 5 13Z" fill={G} stroke={W} /><path d="M8 13L13 6" stroke={W} strokeWidth="1.5" /></>,
  <><path d="M.5 2.5H17.5V15.5H.5Z" stroke={W} /><text x="2.5" y="12.5" fontSize="9" textLength="13" fill={L} stroke="none">123</text></>,
  <><path d="M.5 .5H17.5V16.5H.5ZM3.5 3V14" stroke={W} /><path d="M5 4.5H14M5 9H11M5 13H14" stroke={L} strokeWidth="1.6" /></>,
  <><path d="M.5 2.5H17.5V15.5H.5ZM3 13H8M10.5 13H15.5" stroke={W} /><path d="M3 10L5.5 5L8 10Z" fill="#2e9e46" stroke="none" /><path d="M10 5H15.5L12.8 10Z" fill="#e81123" stroke="none" /></>,
  <><path d="M9 16.5H.5V1.5H17.5V7" stroke={W} /><path d="M1 2H17V4H1Z" fill={G} /><path d="M3.5 7H6.5V9H3.5ZM3.5 12H6.5V14H3.5Z" fill={G} stroke="#999" /><path d="M8.5 9H18L14.5 13V17.5H12V13Z" stroke={W} /></>,
  <><path d="M.5 1.5H17.5V16.5H.5ZM.5 8.5H17.5M.5 12.5H17.5M6 4.5V16.5M12 4.5V16.5" stroke={W} /><path d="M1 2H17V4H1Z" fill={G} stroke="#999" /></>,
  <><path d="M12 5H17V16H1.5V12H12Z" fill={B} stroke="none" /><path d="M.5 1.5H17.5V16.5H.5ZM.5 8.5H17.5M.5 12.5H17.5M6 4.5V16.5M12 4.5V16.5" stroke={W} /><path d="M1 2H17V4H1Z" fill={G} stroke="#999" /></>,
  <text x="4" y="15" fontSize="16" fontWeight="600" textLength="9" lengthAdjust="spacingAndGlyphs" fill="#3a96dd" stroke="none">R</text>,
  <text x="0" y="14" fontSize="16" fontWeight="600" textLength="18" lengthAdjust="spacingAndGlyphs" fill="#3a96dd" stroke="none">Py</text>,
  <>{axis}<path d="M2 3H12M2 8H9M2 13H6M9 8H11" stroke={W} /><circle cx="15" cy="3" r="2" fill={B} stroke={L} /><circle cx="11" cy="8" r="1.5" stroke={W} /><circle cx="7" cy="13" r="1.5" stroke={W} /></>,
  <><path d="M.5 6.5H6V10.5H.5ZM11.5 .5H17.5V4.5H11.5ZM11.5 6.5H17.5V10.5H11.5ZM11.5 12.5H17.5V16.5H11.5Z" fill={B} stroke={L} /><path d="M6 8.5H11M9 2.5V14.5H11M9 2.5H11" stroke={W} /></>,
  <path d="M.5 1.5H17.5V12.5H8L4 16.5V12.5H.5Z" stroke={L} strokeWidth="1.3" />,
  <><path d="M5 4V.5H11.5L15.5 4.5V16.5H3.5V11M11.5 .5V4.5H15.5" stroke={W} /><circle cx="3.5" cy="7" r="2" fill={B} stroke={L} /><path d="M6.5 9H12M8 12H13" stroke={L} /></>,
  <><path d="M4.5 1.5H13.5V7Q13.5 10.5 9 11.5Q4.5 10.5 4.5 7ZM4.5 3H.8Q.5 7.5 5 8M13.5 3H17.2Q17.5 7.5 13 8M8 11.5V15M10 11.5V15" stroke={W} /><path d="M4.5 1.5H13.5M5 16H13" stroke={L} strokeWidth="1.5" /></>,
  <><path d="M2.5 .5H11.5L15.5 4.5V17.5H2.5ZM11.5 .5V4.5H15.5" stroke={W} strokeWidth="1.4" /><path d="M6 10V16M9 13V16M12 9V16" stroke={W} strokeWidth="2" /></>,
  <><path d="M6 3.5H17.5V15.5H.5V11" stroke={W} /><text x="5" y="13" fontSize="8.5" textLength="11" fill={L} stroke="none">123</text><path d="M3 0H8L5 4H8L1 10L3 5H0Z" fill="#f7a04b" stroke="#e8780c" strokeWidth=".6" /></>,
  <><path d="M10 1.5H16.5V7.5H10ZM1.5 11H7.5V17H1.5Z" stroke={W} /><path d="M8.5 9.5H18L14.5 13V17.5H12V13Z" stroke={W} /><path d="M3 0H8L5 4H8L1 10L3 5H0Z" fill="#f7a04b" stroke="#e8780c" strokeWidth=".6" /></>,
  <><path d="M5 1H17V3H14V8L11 10V13H9V17H1V11L6 9Z" fill={B} stroke={L} /><path d="M0 3A3 3 0 0 1 6.5 3C6.5 6 3.5 9.5 3.3 9.5S0 6 0 3Z" fill="#e8780c" stroke="none" /><circle cx="15" cy="15" r="2.5" fill="#e8780c" stroke="none" /><circle cx="16.5" cy="10.5" r="1.4" fill="#e8780c" stroke="none" /><circle cx="3.3" cy="3" r="1" fill="#141414" stroke="none" /></>,
  <path d="M9 .8L17.2 9L9 17.2L.8 9ZM4.900 4.900L13.100 13.100M13.100 4.900L4.900 13.100" stroke="#8b2f92" strokeWidth="1.4" />,
  <path d="M.8 1.5H10.5L17.2 8.5L10.5 15.5H.8L7 8.5ZM5.5 1.5L12 8.5L5.5 15.5" stroke="#1472d0" strokeWidth="1.4" />,
];

function Well({ label, w, field, fw }: { label: string; w: number; field: string; fw: number }) {
  return (
    <div className="flex h-[69px] flex-col">
      <Fit w={w} className="ml-[12px] mt-[8px] leading-[18px]">{label}</Fit>
      <div className="ml-[4px] mt-[5px] h-[37px] w-[170px] border border-dashed border-[#777] px-[2px] pt-[3px]">
        <div className="flex h-6 w-[164px] items-center rounded-[2px] border border-[#6a6a6a] bg-[#1f1f1f]">
          <Fit w={fw} className="ml-[5px] mr-auto">{field}</Fit>
          <Chevron className="scale-90 text-[#ccc]" />
          <Ico w={7} h={7} className="mb-px ml-[8px] mr-[4px] text-[#ccc]"><path d="M.7 .7L6.3 6.3M6.3 .7L.7 6.3" /></Ico>
        </div>
      </div>
    </div>
  );
}

function VisPane() {
  return (
    <div className="flex w-[181px] shrink-0 flex-col border-l border-[#666] bg-[#141414] text-[11.8px] font-semibold text-[#f0f0f0]">
      <div className="flex h-[38px] items-center text-white">
        <Fit w={106} className="ml-2 text-[14.5px] font-bold">Visualiseringer</Fit>
        <Double className="ml-[48px]" />
      </div>
      <Fit w={54} className="-mt-px ml-2 font-bold leading-[17px] text-white">Byg visual</Fit>
      <div className="mt-[3px] flex h-8 text-[#b5b3b1]">
        <span className="ml-2 flex size-8 items-center justify-center bg-[#292929]">
          <Ico w={24} h={25}><path d="M0 1H19" /><path d="M.6 4.6H23.4V12.4H.6ZM.6 15.6H23.4V23.4H.6Z" fill="#2aac94" stroke="#ddd" strokeDasharray="2 1" /></Ico>
        </span>
        <Ico w={24} h={26} className="ml-[39px] mt-[3px]">
          <path d="M8 21H1.5V10H6.5V21M6.5 10V2H12V17M12 7H17V10" strokeWidth="1.3" />
          <path d="M22.5 8L14 16.5L16 18.5Q21 14 22.5 8ZM13.5 17Q10 16 9 21Q8 23.5 6 23Q12 26 15.5 19Z" strokeWidth="1.2" />
        </Ico>
        <Ico w={26} h={26} className="ml-[40px] mt-[3px]">
          <circle cx="11.5" cy="11.5" r="10" strokeWidth="1.3" />
          <path d="M2 11L7 7L12 11L20 4M7 19V13M10.5 20V14M14 20V14M17.5 18V10" strokeWidth="1.3" />
          <path d="M18 18L24 24" strokeWidth="3" />
        </Ico>
      </div>
      <svg width="180" height="14" viewBox="0 0 180 14" className="mt-[4px] shrink-0"><path d="M0 8.5H16L24 .8L32 8.5H180" fill="none" stroke="#777" /></svg>
      <div className="ml-[6px] mt-[1px] grid w-[168px] grid-cols-6">
        {visIcons.map((ic, i) => (
          <span key={i} className="flex h-7 w-7 items-center justify-center">
            <span className={clsx("flex size-6 items-center justify-center", i === 28 && "border border-white")}><Ico>{ic}</Ico></span>
          </span>
        ))}
      </div>
      <Ico w={12} h={4} className="ml-[14px] mt-[11px]"><path d="M.5 2H2.5M4.5 2H6.5M8.5 2H10.5" strokeWidth="2" /></Ico>
      <span className="mt-[16px] h-px w-full bg-[#d0d0d0]" />
      <Well label="Rækker" w={40} field="Afgangslufthavn" fw={86} />
      <Well label="Kolonner" w={47} field="Ankomstlufthavn" fw={90} />
      <Well label="Værdier" w={41} field="% rejser forsinket >15..." fw={124} />
      <Fit w={79} className="ml-[12px] mt-[8px] font-bold leading-[18px]">Detaljeadgang</Fit>
      <div className="mt-[9px] flex h-4 items-center">
        <Fit w={108} className="ml-[12px]">Tværgående rapport</Fit>
        <span className="ml-[6px] flex h-4 w-8 items-center rounded-full border border-[#aaa] pl-[4px]"><span className="size-2 rounded-full bg-[#b5b3b1]" /></span>
      </div>
      <div className="mt-[10px] flex h-4 items-center">
        <Fit w={86} className="ml-[12px] mt-px">Behold alle filtre</Fit>
        <span className="ml-[28px] flex h-4 w-8 items-center rounded-full bg-[#2aac94] pl-[6px] text-[#222]">
          <Ico w={10} h={8}><path d="M.7 4.2L3.5 7L9.3 1" /></Ico><span className="ml-[3px] size-2 rounded-full bg-[#222]" />
        </span>
      </div>
      <div className="ml-[4px] mt-[11px] flex h-[26px] w-[170px] items-center border border-dashed border-[#777] bg-black">
        <Fit w={149} className="ml-[8px] mt-px">Træk detaljeadgangsfelter ...</Fit>
      </div>
    </div>
  );
}

/* ---------- data pane ---------- */

const tables: { name: string; w: number; kind: "plain" | "calc" | "used" }[] = [
  { name: "airlines", w: 37, kind: "plain" },
  { name: "airports", w: 41, kind: "plain" },
  { name: "airports_destination", w: 105, kind: "calc" },
  { name: "delaytype", w: 51, kind: "calc" },
  { name: "flights", w: 33, kind: "used" },
];

function DataPane() {
  return (
    <div className="flex w-[181px] shrink-0 flex-col border-l border-[#666] bg-[#141414] text-[12px] text-white">
      <div className="flex h-[38px] items-center">
        <Fit w={33} className="ml-2 text-[14.5px] font-bold">Data</Fit>
        <Double className="ml-[121px]" />
      </div>
      <div className="ml-[4px] mt-[7px] flex h-6 w-[172px] items-center rounded-[3px] border border-[#6a6a6a] bg-[#1f1f1f] text-[#a0a0a0]">
        <Ico w={15} h={15} className="ml-[12px]"><circle cx="6" cy="6" r="5" /><path d="M9.7 9.7L14 14" /></Ico>
        <Fit w={57} className="ml-[6px] mt-px text-[13px]">Søg efter</Fit>
      </div>
      <div className="mt-[10px] flex flex-col font-semibold">
        {tables.map((t) => (
          <div key={t.name} className="flex h-6 items-center">
            <Ico w={6} h={9} className="ml-[16px]"><path d="M1 1L4.8 4.5L1 8" strokeWidth="1.3" /></Ico>
            <Ico w={18} h={20} className="ml-[5px]">
              <rect x="2" y="3.5" width="11" height="11" rx="1.5" />
              <path d="M2 7H13M2 10.8H13M5.7 3.5V14.5M9.4 3.5V14.5" />
              {t.kind === "calc" && <><rect x="8" y="6" width="8" height="11" fill="#141414" stroke="none" /><rect x="8.7" y="7.2" width="6.5" height="9" /><path d="M10 9.5H14M10 12H14M10 14H14M12 11.5V15.5" /></>}
              {t.kind === "used" && <><circle cx="12" cy="14" r="6" fill="#0f6b5c" stroke="none" /><path d="M9.5 14L11.3 15.8L14.5 12.5" strokeWidth="1.4" /></>}
            </Ico>
            <Fit w={t.w} className="ml-[2px]">{t.name}</Fit>
          </div>
        ))}
      </div>
    </div>
  );
}

/* ---------- status bar and taskbar ---------- */

function StatusBar() {
  return (
    <div className="flex h-[25px] shrink-0 items-center border-t border-[#666] bg-[#141414] text-[12px] text-[#d8d8d8]">
      <Fit w={55} className="ml-[4px] mt-[2px]">Side 2 af 7</Fit>
      <span className="ml-[1397px] h-[2px] w-[5px] bg-[#d8d8d8]" />
      <span className="ml-[5px] flex h-px w-[100px] items-center bg-[#d8d8d8]"><span className="ml-[48px] h-[11px] w-1 bg-[#d8d8d8]" /></span>
      <Ico w={9} h={9} className="ml-[5px]"><path d="M4.5 .5V8.5M.5 4.5H8.5" strokeWidth="1.3" /></Ico>
      <Fit w={32} className="ml-[13px]">103 %</Fit>
      <Ico w={15} h={11} className="ml-[13px]"><rect x=".6" y=".6" width="13.8" height="9.8" rx="1.5" /><path d="M5.5 3H3.5V8H5.5M9.5 3H11.5V8H9.5" /></Ico>
      <Fit w={249} className="ml-[14px] mt-[2px]">Der findes en opdatering (klik for at hente den)</Fit>
    </div>
  );
}

const taskIcons: { ic: React.ReactNode; run?: boolean; active?: boolean; w: string }[] = [
  { w: "w-12", ic: <path d="M4 6.5L11 5.5V11.5H4ZM12 5.3L20 4.2V11.5H12ZM4 12.5H11V18.5L4 17.5ZM12 12.5H20V19.8L12 18.7Z" fill="#fff" stroke="none" /> },
  { w: "w-[49px]", ic: <><path d="M4.5 8.5H14.5V15.5H4.5ZM4.5 4V6.5H14.5V4M4.5 20V17.5H14.5V20M18.5 4V20" stroke="#ddd" /><path d="M17 9H20" stroke="#fff" strokeWidth="3" /></> },
  { w: "w-[52px]", run: true, ic: <><path d="M12 2C14 4 16 4 17.5 6C21 8 23 12 22.5 15A11 9.5 0 0 1 1 14C1 9 3 7 4 4L6 7C9 6 11 5 12 2Z" fill="#ff7b22" stroke="none" /><path d="M14 .5C14 5 20 7 20 13A8.5 8 0 0 1 12 21Q18 15 12 7Q12 3 14 .5Z" fill="#ffcd3a" stroke="none" /><path d="M2 11Q6 9 9 10L6 13Q10 20 16 18Q10 24 4 19Z" fill="#f0355a" stroke="none" /><circle cx="12" cy="13.5" r="5" fill="#7a4bd8" stroke="none" /><path d="M8 9L14 9.5L11 12Z" fill="#ffb52e" stroke="none" /></> },
  { w: "w-[47px]", run: true, ic: <><path d="M1 3H8L10 5H20V8H1Z" fill="#dba11f" stroke="none" /><path d="M1 6H23V21H1Z" fill="#fdd663" stroke="none" /><path d="M5 13H19V22H15V17H9V22H5Z" fill="#3d8fdc" stroke="none" /></> },
  { w: "w-[49px]", ic: <><path d="M1 3H23V21H1Z" fill="#3b3b3b" stroke="none" /><path d="M1 3H23V6.5H1Z" fill="#8c8c8c" stroke="none" /><path d="M4 9L9 13L4 17M11 17.5H18" stroke="#eee" strokeWidth="2" /></> },
  { w: "w-[49px]", run: true, ic: <><path d="M17 0L23 3V21L17 24L16.5 23V1Z" fill="#29a8f0" stroke="none" /><path d="M17 3L2 16.5M17 21L2 7.5" stroke="#1383cf" strokeWidth="3.6" /></> },
  { w: "w-[49px]", ic: <><path d="M5 8L14 1L23 8V21Q23 23 21 23H7Q5 23 5 21Z" fill="#1c71c7" stroke="none" /><path d="M9 4H19V14H9Z" fill="#7fd0f7" stroke="none" /><path d="M23 9V23H8Z" fill="#35b1f1" stroke="none" /><rect x="0" y="6" width="13" height="13" rx="1.5" fill="#0f5bb0" stroke="none" /><circle cx="6.5" cy="12.5" r="3.2" stroke="#fff" strokeWidth="1.8" /></> },
  { w: "w-[49px]", ic: <><circle cx="13" cy="5" r="4" fill="#7b83eb" stroke="none" /><circle cx="20.5" cy="6" r="2.8" fill="#5059c9" stroke="none" /><path d="M16 9.5H24V16Q23 20 19 19Z" fill="#5059c9" stroke="none" /><path d="M6 9.5H19V17Q18 23 12.5 23T6 17Z" fill="#7b83eb" stroke="none" /><rect x="0" y="6" width="12" height="12" rx="1" fill="#4b53bc" stroke="none" /><path d="M3 9.5H9M6 9.5V15.5" stroke="#fff" strokeWidth="1.6" /></> },
  { w: "w-[50px]", run: true, ic: <><path d="M3 3L21 1L23 17L9 22L1 15Z" fill="#c9cdd0" stroke="none" /><path d="M6 4L20 3L21 14L7 16Z" fill="#f4f7f9" stroke="#777" /><path d="M7 12L9 10L11 7L13 13L15 6L17 12L20 11" stroke="#2b8fc7" strokeWidth="1.3" /><path d="M3 17L11 20L9 24L2 21Z" fill="#aaa" stroke="none" /></> },
  { w: "w-[48px]", run: true, active: true, ic: <><rect x="13" y="0" width="9" height="24" rx="1" fill="#d99a16" stroke="none" /><rect x="8" y="6" width="9" height="18" rx="1" fill="#f2c230" stroke="none" /><rect x="3" y="12" width="8" height="12" rx="1" fill="#fbe07a" stroke="none" /></> },
  { w: "w-[47px]", run: true, ic: <><path d="M3 1H20V23H3Z" fill="#f2f2f2" stroke="#999" /><path d="M5 3H18V14H5Z" fill="#1c3f94" stroke="none" /><path d="M5 8Q8 2 12 6Q15 3 18 5V3H5ZM5 12Q10 7 14 10L12 13H5Z" fill="#a9c6f2" stroke="none" /><path d="M6 17.500H12L10 20H6Z" fill="#222" stroke="none" /><path d="M23 8L13 18" stroke="#b52b2b" strokeWidth="2" /></> },
];

function Taskbar() {
  return (
    <div className="flex h-10 shrink-0 items-center border-t border-black bg-[#1f1f1f] text-white">
      {taskIcons.map((t, i) => (
        <span key={i} className={clsx("relative flex h-full shrink-0 items-center justify-center pb-px", t.w, t.active && "bg-[#4c4c4c]")}>
          <Ico w={24} h={24}>{t.ic}</Ico>
          {t.run && <span className={clsx("absolute bottom-0 h-[2px] bg-[#6abe5e]", t.active ? "w-full" : "w-10")} />}
        </span>
      ))}
      <Ico w={14} h={8} className="ml-auto"><path d="M1 7L7 1L13 7" strokeWidth="1.3" /></Ico>
      <Ico w={17} h={17} className="ml-[9px]"><path d="M1 3L16 1V14L1 15.5ZM4 8Q6 4 10 6L11 7V4M12 9Q9 13 6 11L5 10V12" strokeWidth="1.3" /><circle cx="13" cy="13" r="3.8" fill="#ff9a1a" stroke="none" /></Ico>
      <Ico w={14} h={14} className="ml-[10px]"><path d="M1 13A12 12 0 0 1 12 2M4 13A9 9 0 0 1 12.5 5M7 13A6 6 0 0 1 12.5 8" /><circle cx="11" cy="12" r="1.5" fill="#fff" stroke="none" /></Ico>
      <Ico w={17} h={15} className="ml-[8px]"><path d="M1 5H3.5L7 1.5V13.5L3.5 10H1ZM9.5 5Q11 7.5 9.5 10" strokeWidth="1.2" /><path d="M12 3.5Q14.5 7.5 12 11.5M14.5 2Q17.5 7.5 14.5 13" stroke="#777" /></Ico>
      <Fit w={25} className="ml-[8px] text-[12px]">DAN</Fit>
      <div className="ml-[12px] flex w-[58px] flex-col items-center pb-[3px] text-[11.5px] leading-[18px]"><Fit w={26}>15:31</Fit><Fit w={58}>28-03-2025</Fit></div>
      <div className="relative ml-[18px] h-6 w-6">
        <Ico w={17} h={18}><path d="M0 1H16V14H11L8 17V14H0Z" fill="#fff" stroke="none" /><path d="M3 4.5H13M3 7.5H13M3 10.5H10" stroke="#1f1f1f" /></Ico>
        <span className="absolute left-[7px] top-[7px] flex size-[17px] items-center justify-center rounded-full border border-[#999] bg-[#333] text-[11px] font-semibold">3</span>
      </div>
      <span className="ml-[12px] mr-[3px] h-full w-px bg-[#777]" />
    </div>
  );
}

export default function App() {
  return (
    <div className="flex h-[1080px] w-[1920px] flex-col overflow-hidden bg-[#141414] font-['Open_Sans','Noto_Sans',sans-serif]">
      <TitleBar />
      <MenuBar />
      <Ribbon />
      <div className="flex h-[905px] shrink-0">
        <Rail />
        <div className="flex w-[1517px] shrink-0 flex-col">
          <div className="flex h-[870px]">
            <div className="relative w-[1316px] shrink-0 bg-[#ccc]">
              <div className="flex"><ComboChart /><Gauge /></div>
              <Matrix />
              <Tooltip />
            </div>
            <FilterPane />
          </div>
          <PageTabs />
        </div>
        <VisPane />
        <DataPane />
      </div>
      <StatusBar />
      <Taskbar />
    </div>
  );
}
